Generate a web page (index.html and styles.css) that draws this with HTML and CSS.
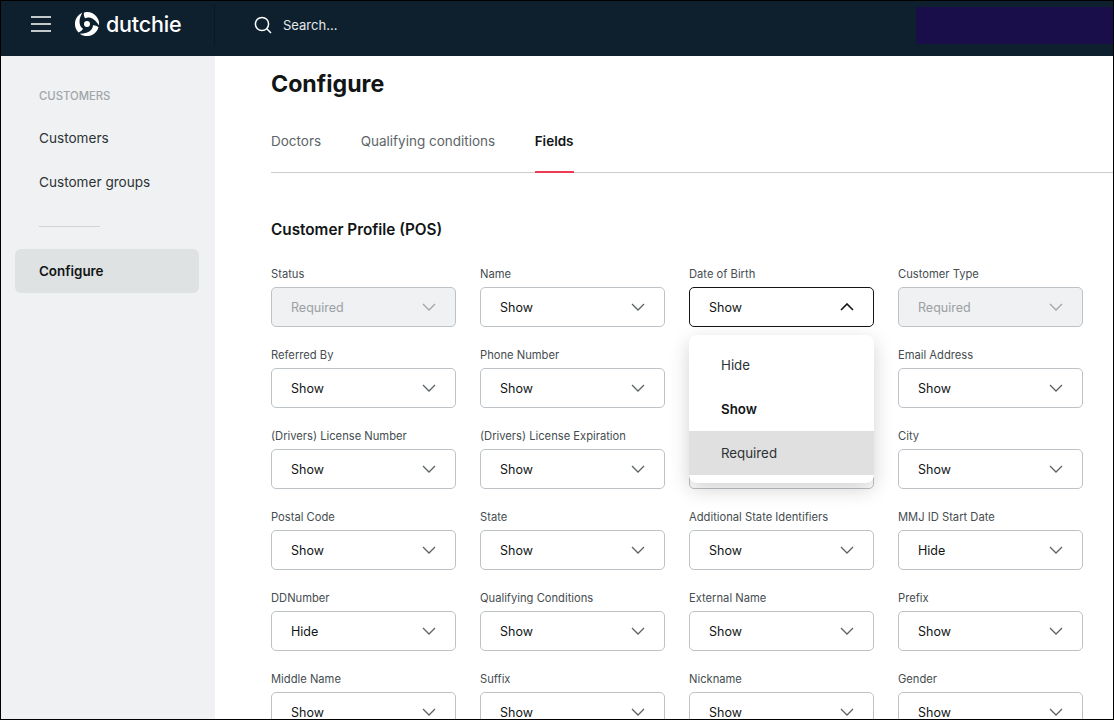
FILE: index.html
```html
<!DOCTYPE html>
<html lang="en">
<head>
<meta charset="utf-8">
<title>Configure</title>
<link rel="stylesheet" href="styles.css">
</head>
<body>
<div class="frame">
  <header class="topbar">
    <div class="brand">
      <svg class="burger" width="20" height="16" viewBox="0 0 20 16"><path d="M0 1h20M0 8h20M0 15h20"/></svg>
      <svg class="logo" width="24" height="24" viewBox="-12 -12 24 24">
        <circle r="3" fill="#fff"/>
        <g fill="#fff">
          <path d="M12 1.500A12 12 0 0 0 -3 -11.600C-3.400 -9.400 -3.100 -7.500 -2 -5.800C2 -7.800 7.600 -6.200 12 1.500Z"/>
          <path transform="rotate(120)" d="M12 1.500A12 12 0 0 0 -3 -11.600C-3.400 -9.400 -3.100 -7.500 -2 -5.800C2 -7.800 7.600 -6.200 12 1.500Z"/>
          <path transform="rotate(240)" d="M12 1.500A12 12 0 0 0 -3 -11.600C-3.400 -9.400 -3.100 -7.500 -2 -5.800C2 -7.800 7.600 -6.200 12 1.500Z"/>
        </g>
      </svg>
      <span class="wordmark">dutchie</span>
    </div>
    <div class="search">
      <svg width="20" height="20" viewBox="0 0 20 20"><circle cx="9" cy="9" r="6.600" stroke="#fff" stroke-width="1.500" fill="none"/><path d="M13.800 13.800 18 18" stroke="#fff" stroke-width="1.500" fill="none"/></svg>
      <span>Search...</span>
    </div>
    <div class="promo"></div>
  </header>
  <div class="body">
    <aside class="sidebar">
      <div class="side-head">CUSTOMERS</div>
      <a class="side-link">Customers</a>
      <a class="side-link">Customer groups</a>
      <div class="side-rule"></div>
      <a class="side-link active">Configure</a>
    </aside>
    <main class="main">
      <h1>Configure</h1>
      <nav class="tabs">
        <a class="tab">Doctors</a>
        <a class="tab">Qualifying conditions</a>
        <a class="tab current">Fields</a>
      </nav>
      <h2>Customer Profile (POS)</h2>
      <div class="grid">
        <div class="field"><label>Status</label><div class="select disabled"><span>Required</span><svg class="chev" width="14" height="8" viewBox="0 0 14 8"><path d="M1 1l6 6 6-6"/></svg></div></div>
        <div class="field"><label>Name</label><div class="select"><span>Show</span><svg class="chev" width="14" height="8" viewBox="0 0 14 8"><path d="M1 1l6 6 6-6"/></svg></div></div>
        <div class="field open"><label>Date of Birth</label><div class="select focus"><span>Show</span><svg class="chev" width="14" height="8" viewBox="0 0 14 8"><path d="M1 7l6-6 6 6"/></svg></div>
          <ul class="menu"><li>Hide</li><li class="picked">Show</li><li class="hover">Required</li></ul>
        </div>
        <div class="field"><label>Customer Type</label><div class="select disabled"><span>Required</span><svg class="chev" width="14" height="8" viewBox="0 0 14 8"><path d="M1 1l6 6 6-6"/></svg></div></div>

        <div class="field"><label>Referred By</label><div class="select"><span>Show</span><svg class="chev" width="14" height="8" viewBox="0 0 14 8"><path d="M1 1l6 6 6-6"/></svg></div></div>
        <div class="field"><label>Phone Number</label><div class="select"><span>Show</span><svg class="chev" width="14" height="8" viewBox="0 0 14 8"><path d="M1 1l6 6 6-6"/></svg></div></div>
        <div class="field"></div>
        <div class="field"><label>Email Address</label><div class="select"><span>Show</span><svg class="chev" width="14" height="8" viewBox="0 0 14 8"><path d="M1 1l6 6 6-6"/></svg></div></div>

        <div class="field"><label>(Drivers) License Number</label><div class="select"><span>Show</span><svg class="chev" width="14" height="8" viewBox="0 0 14 8"><path d="M1 1l6 6 6-6"/></svg></div></div>
        <div class="field"><label>(Drivers) License Expiration</label><div class="select"><span>Show</span><svg class="chev" width="14" height="8" viewBox="0 0 14 8"><path d="M1 1l6 6 6-6"/></svg></div></div>
        <div class="field"><label>&nbsp;</label><div class="select"><span>Show</span></div></div>
        <div class="field"><label>City</label><div class="select"><span>Show</span><svg class="chev" width="14" height="8" viewBox="0 0 14 8"><path d="M1 1l6 6 6-6"/></svg></div></div>

        <div class="field"><label>Postal Code</label><div class="select"><span>Show</span><svg class="chev" width="14" height="8" viewBox="0 0 14 8"><path d="M1 1l6 6 6-6"/></svg></div></div>
        <div class="field"><label>State</label><div class="select"><span>Show</span><svg class="chev" width="14" height="8" viewBox="0 0 14 8"><path d="M1 1l6 6 6-6"/></svg></div></div>
        <div class="field"><label>Additional State Identifiers</label><div class="select"><span>Show</span><svg class="chev" width="14" height="8" viewBox="0 0 14 8"><path d="M1 1l6 6 6-6"/></svg></div></div>
        <div class="field"><label>MMJ ID Start Date</label><div class="select"><span>Hide</span><svg class="chev" width="14" height="8" viewBox="0 0 14 8"><path d="M1 1l6 6 6-6"/></svg></div></div>

        <div class="field"><label>DDNumber</label><div class="select"><span>Hide</span><svg class="chev" width="14" height="8" viewBox="0 0 14 8"><path d="M1 1l6 6 6-6"/></svg></div></div>
        <div class="field"><label>Qualifying Conditions</label><div class="select"><span>Show</span><svg class="chev" width="14" height="8" viewBox="0 0 14 8"><path d="M1 1l6 6 6-6"/></svg></div></div>
        <div class="field"><label>External Name</label><div class="select"><span>Show</span><svg class="chev" width="14" height="8" viewBox="0 0 14 8"><path d="M1 1l6 6 6-6"/></svg></div></div>
        <div class="field"><label>Prefix</label><div class="select"><span>Show</span><svg class="chev" width="14" height="8" viewBox="0 0 14 8"><path d="M1 1l6 6 6-6"/></svg></div></div>

        <div class="field"><label>Middle Name</label><div class="select"><span>Show</span><svg class="chev" width="14" height="8" viewBox="0 0 14 8"><path d="M1 1l6 6 6-6"/></svg></div></div>
        <div class="field"><label>Suffix</label><div class="select"><span>Show</span><svg class="chev" width="14" height="8" viewBox="0 0 14 8"><path d="M1 1l6 6 6-6"/></svg></div></div>
        <div class="field"><label>Nickname</label><div class="select"><span>Show</span><svg class="chev" width="14" height="8" viewBox="0 0 14 8"><path d="M1 1l6 6 6-6"/></svg></div></div>
        <div class="field"><label>Gender</label><div class="select"><span>Show</span><svg class="chev" width="14" height="8" viewBox="0 0 14 8"><path d="M1 1l6 6 6-6"/></svg></div></div>
      </div>
    </main>
  </div>
</div>
</body>
</html>
```
FILE: styles.css
```css
* { box-sizing: border-box; }
html, body { margin: 0; height: 100%; overflow: hidden; background: #fff; }
body { font-family: Inter, "Liberation Sans", sans-serif; color: #121516; }
.frame { width: 1114px; height: 720px; border: 1px solid #000; display: flex; flex-direction: column; overflow: hidden; }
.topbar { height: 55px; flex: none; background: #0e202e; display: flex; align-items: center; padding-bottom: 8px; color: #fff; }
.brand { width: 214px; height: 42px; flex: none; display: flex; align-items: center; padding-left: 30px; border-right: 1px solid #0a1824; }
.burger { margin-top: -2px; fill: none; stroke: #fff; stroke-width: 1.300; }
.logo { margin-left: 24px; margin-top: -2px; }
.wordmark { margin-left: 7px; margin-top: -2px; font-size: 21.500px; font-weight: 500; letter-spacing: -0.2px; }
.search { display: flex; align-items: center; gap: 10px; margin-left: 38px; font-size: 13px; color: #e4e8ea; flex: 1; }
.promo { width: 197px; height: 37px; background: #1a0e4a; margin-top: 2px; }
.body { flex: 1; display: flex; min-height: 0; }
.sidebar { width: 214px; flex: none; background: #f0f1f2; padding: 33px 16px 0 14px; }
.side-head { font-size: 11.300px; font-weight: 500; color: #a0a6a9; padding-left: 24px; height: 14px; line-height: 14px; margin: 0 0 13px; }
.side-link { display: block; height: 44px; line-height: 44px; padding-left: 24px; font-size: 13.600px; color: #2c3236; border-radius: 6px; }
.side-rule { width: 61px; height: 1px; background: #d0d4d6; margin: 22px 0 22px 24px; }
.side-link.active { background: #dfe2e3; font-weight: 600; color: #121516; font-size: 13.400px; }
.main { flex: 1; padding-left: 56px; min-width: 0; }
h1 { margin: 14px 0 0; font-size: 23.200px; font-weight: 700; line-height: 28px; }
.tabs { display: flex; gap: 39.500px; height: 44px; margin-top: 31px; border-bottom: 1px solid #c9cdd0; }
.tab { font-size: 13.500px; color: #5d6569; line-height: 24px; height: 44px; }
.tab.current { color: #121516; font-weight: 600; border-bottom: 2px solid #ee3a52; }
h2 { margin: 46px 0 0; font-size: 15.300px; font-weight: 600; line-height: 22px; }
.grid { display: grid; grid-template-columns: repeat(4, 185px); column-gap: 24px; row-gap: 18px; margin-top: 26px; }
.field { position: relative; height: 63px; }
.field label { display: block; font-size: 11.200px; color: #464d51; height: 14px; line-height: 14px; margin-bottom: 6px; }
.select { height: 40px; border: 1px solid #bcc2c6; border-radius: 5px; display: flex; align-items: center; justify-content: space-between; padding: 0 19px; font-size: 12.500px; color: #121516; background: #fff; }
.chev { fill: none; stroke: #5b6367; stroke-width: 1.300; }
.select.disabled { background: #f0f1f2; color: #9aa0a4; }
.select.disabled .chev { stroke: #a0a6a9; }
.select.focus { border-color: #121516; }
.select.focus .chev { stroke: #121516; stroke-width: 1.600; }
.menu { position: absolute; z-index: 2; left: 0; top: 68px; width: 185px; margin: 0; padding: 8px 0; list-style: none; background: #fff; border-radius: 8px; box-shadow: 0 6px 20px rgba(0,0,0,.18); }
.menu li { height: 44px; line-height: 44px; padding-left: 32px; font-size: 13.300px; color: #2c3236; }
.menu li.picked { font-weight: 600; color: #121516; }
.menu li.hover { background: #e0e0e0; }
```
